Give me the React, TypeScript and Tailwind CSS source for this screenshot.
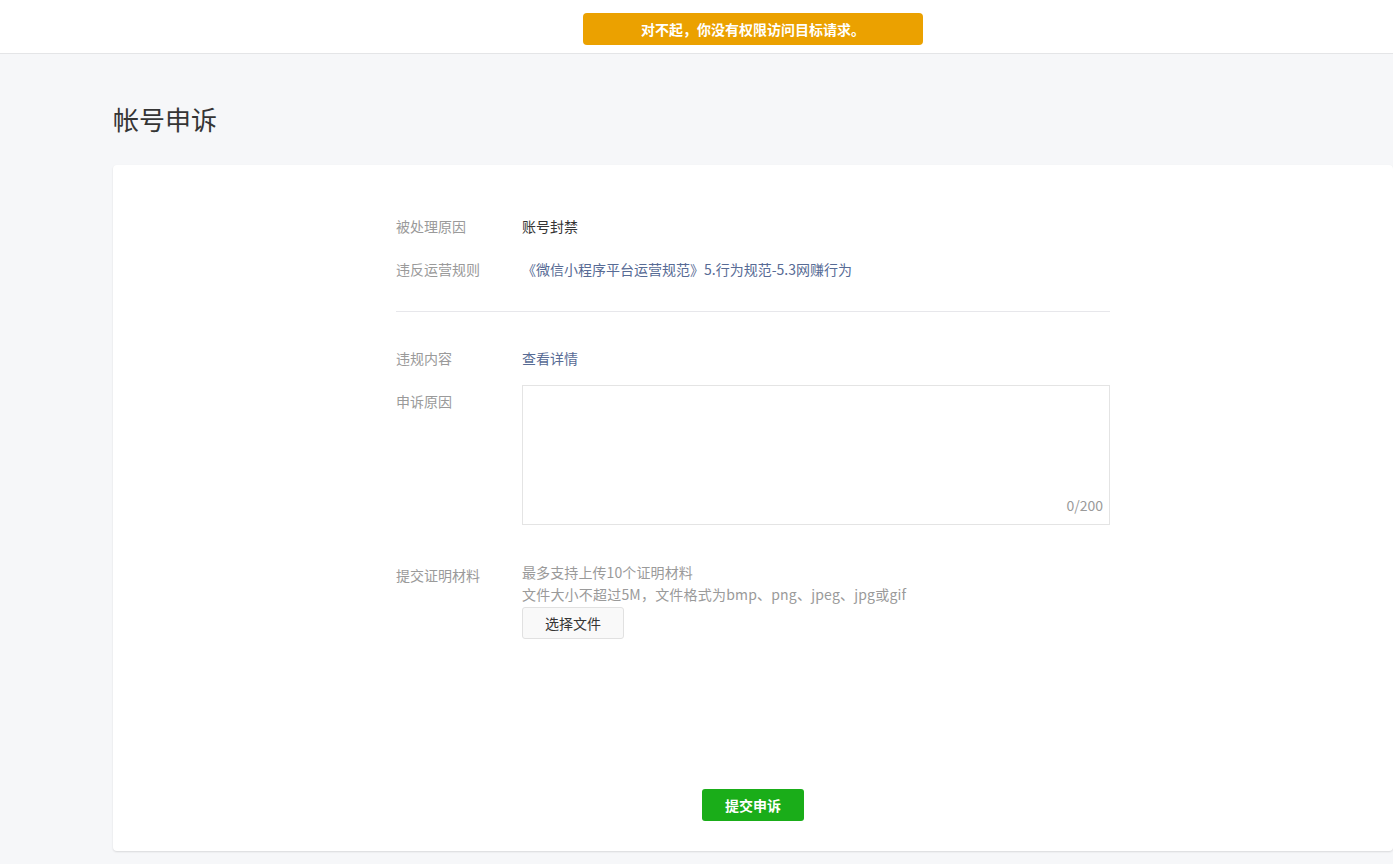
export default function App() {
  return (
    <div className="min-h-screen bg-[#f6f7f9] font-['Noto_Sans_CJK_SC',sans-serif] text-[#353535]">
      {/* top bar with warning toast */}
      <header className="h-[54px] bg-white border-b border-[#e4e5e7]">
        <div className="ml-[113px] w-[1280px] flex justify-center pt-[13px]">
          <div className="w-[340px] h-[32px] rounded-[4px] bg-[#eba100] flex items-center justify-center text-white text-[14px] font-bold">
            对不起，你没有权限访问目标请求。
          </div>
        </div>
      </header>

      <div className="ml-[113px] w-[1280px]">
        <h1 className="mt-[50px] mb-[31px] text-[26px] leading-[30px] font-normal text-[#353535]">帐号申诉</h1>

        <div className="bg-white rounded-[4px] shadow-[0_1px_2px_rgba(0,0,0,0.12)] pt-[51px] pb-[30px]">
          <div className="w-[714px] mx-auto text-[14px]">
            {/* reason */}
            <div className="flex leading-[20px]">
              <div className="w-[126px] text-[#9a9a9a]">被处理原因</div>
              <div className="text-[#353535]">账号封禁</div>
            </div>
            <div className="flex leading-[20px] mt-[23px]">
              <div className="w-[126px] text-[#9a9a9a]">违反运营规则</div>
              <a className="text-[#576b95] cursor-pointer">《微信小程序平台运营规范》5.行为规范-5.3网赚行为</a>
            </div>

            <div className="h-px bg-[#e7e7eb] mt-[32px]" />

            <div className="flex leading-[20px] mt-[36px]">
              <div className="w-[126px] text-[#9a9a9a]">违规内容</div>
              <a className="text-[#576b95] cursor-pointer">查看详情</a>
            </div>

            {/* appeal text */}
            <div className="flex mt-[17px]">
              <div className="w-[126px] text-[#9a9a9a] leading-[20px] pt-[6px]">申诉原因</div>
              <div className="relative flex-1 h-[140px] border border-[#e4e4e4]">
                <textarea className="w-full h-full resize-none outline-none px-[10px] py-[8px] text-[14px]" />
                <span className="absolute right-[6px] bottom-[9px] text-[#9a9a9a] leading-[20px]">0/200</span>
              </div>
            </div>

            {/* attachments */}
            <div className="flex mt-[36px]">
              <div className="w-[126px] text-[#9a9a9a] leading-[20px] pt-[4px]">提交证明材料</div>
              <div className="flex flex-col items-start">
                <p className="text-[#9a9a9a] leading-[22px] tracking-[0.1px]">最多支持上传10个证明材料</p>
                <p className="text-[#9a9a9a] leading-[22px] tracking-[0.2px]">文件大小不超过5M，文件格式为bmp、png、jpeg、jpg或gif</p>
                <button className="mt-[2px] w-[102px] h-[32px] border border-[#e1e1e1] bg-[#f9f9f9] rounded-[3px] text-[#353535] text-[14px]">
                  选择文件
                </button>
              </div>
            </div>

            <div className="flex justify-center mt-[150px]">
              <button className="w-[102px] h-[32px] rounded-[3px] bg-[#1aad19] text-white text-[14px] font-bold">
                提交申诉
              </button>
            </div>
          </div>
        </div>
      </div>
    </div>
  );
}
